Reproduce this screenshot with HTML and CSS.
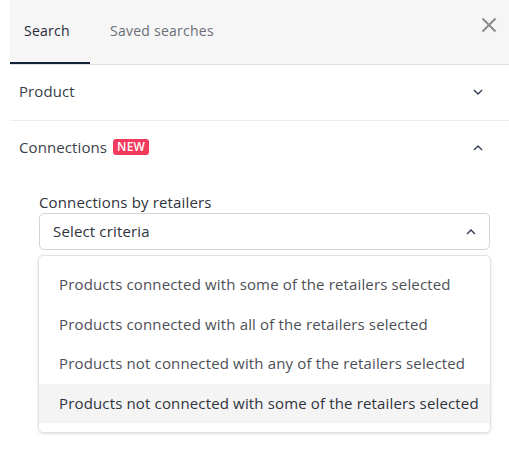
FILE: index.html
```html
<!DOCTYPE html>
<html>
<head>
<meta charset="utf-8">
<link rel="stylesheet" href="styles.css">
</head>
<body>
<div class="panel">
  <div class="header">
    <div class="tabs">
      <div class="tab active">Search</div>
      <div class="tab">Saved searches</div>
    </div>
    <div class="close">
      <svg width="16" height="16" viewBox="0 0 16 16"><path d="M1.5 1.5L14.5 14.5M14.5 1.5L1.5 14.5" stroke="#8a8a8a" stroke-width="2" fill="none"/></svg>
    </div>
  </div>
  <div class="section">
    <div class="section-head">
      <span class="title">Product</span>
      <svg class="chev" width="10" height="6" viewBox="0 0 10 6"><path d="M1 1L5 5L9 1" stroke="#2e3d55" stroke-width="1.4" fill="none"/></svg>
    </div>
  </div>
  <div class="section open">
    <div class="section-head">
      <span class="title">Connections <span class="badge">NEW</span></span>
      <svg class="chev" width="10" height="6" viewBox="0 0 10 6"><path d="M1 5L5 1L9 5" stroke="#2e3d55" stroke-width="1.4" fill="none"/></svg>
    </div>
    <div class="section-body">
      <div class="label">Connections by retailers</div>
      <div class="select">
        <span>Select criteria</span>
        <svg width="10" height="6" viewBox="0 0 10 6"><path d="M1 5L5 1L9 5" stroke="#2e3d55" stroke-width="1.4" fill="none"/></svg>
      </div>
      <div class="menu">
        <div class="item">Products connected with some of the retailers selected</div>
        <div class="item">Products connected with all of the retailers selected</div>
        <div class="item">Products not connected with any of the retailers selected</div>
        <div class="item hover">Products not connected with some of the retailers selected</div>
      </div>
    </div>
  </div>
</div>
</body>
</html>
```
FILE: styles.css
```css
* { box-sizing: border-box; }
html, body { margin: 0; padding: 0; background: #fff; }
body {
  font-family: "Open Sans", "Liberation Sans", sans-serif;
  color: #3a3f4a;
  width: 509px;
  height: 454px;
  overflow: hidden;
}
.panel {
  margin-left: 10px;
}
.header {
  background: #f6f6f6;
  height: 65px;
  border-bottom: 1px solid #dedede;
  display: flex;
  justify-content: space-between;
  align-items: flex-start;
}
.tabs {
  display: flex;
  height: 64px;
}
.tab {
  font-size: 14px;
  color: #6b6e76;
  padding: 0 20px 0 20px;
  line-height: 62px;
  height: 64px;
  letter-spacing: 0.25px;
}
.tab.active {
  color: #1f2a36;
  padding: 0 20px 0 14px;
  width: 80px;
  border-bottom: 2px solid #12233a;
}
.close {
  padding: 17px 12px 0 0;
}
.close svg { display: block; }
.section + .section {
  border-top: 1px solid #ececec;
}
.section-head {
  display: flex;
  justify-content: space-between;
  align-items: center;
  height: 55px;
  padding: 0 26px 3px 9px;
}
.chev { margin-top: 1px; }
.title {
  font-size: 15px;
  color: #3a3f4a;
  display: flex;
  align-items: center;
  letter-spacing: 0.1px;
}
.badge {
  display: inline-block;
  background: #f23a5e;
  color: #fff;
  font-size: 12px;
  font-weight: 600;
  line-height: 16px;
  padding: 0 4px;
  border-radius: 3px;
  margin-left: 6px;
  letter-spacing: 0.2px;
}
.section-body {
  padding: 16px 19px 0 29px;
}
.label {
  font-size: 15px;
  line-height: 20px;
  color: #2f333b;
  margin-bottom: 1px;
  letter-spacing: 0.15px;
}
.select {
  height: 37px;
  border: 1px solid #d4d4d4;
  border-radius: 5px;
  display: flex;
  align-items: center;
  justify-content: space-between;
  padding: 0 13px 2px 13px;
  font-size: 15px;
  color: #2f333b;
  letter-spacing: 0.15px;
}
.select svg { margin-top: 2px; }
.menu {
  margin: 5px -1px 0 -1px;
  border: 1px solid #e2e2e2;
  border-radius: 5px;
  box-shadow: 0 1px 3px rgba(0,0,0,0.12);
  padding: 9px 0;
}
.item {
  height: 39.5px;
  line-height: 38px;
  padding-left: 20px;
  font-size: 15px;
  color: #4d4f57;
  white-space: nowrap;
  letter-spacing: 0.15px;
}
.item.hover {
  background: #f4f4f4;
  color: #2f333b;
}
```
